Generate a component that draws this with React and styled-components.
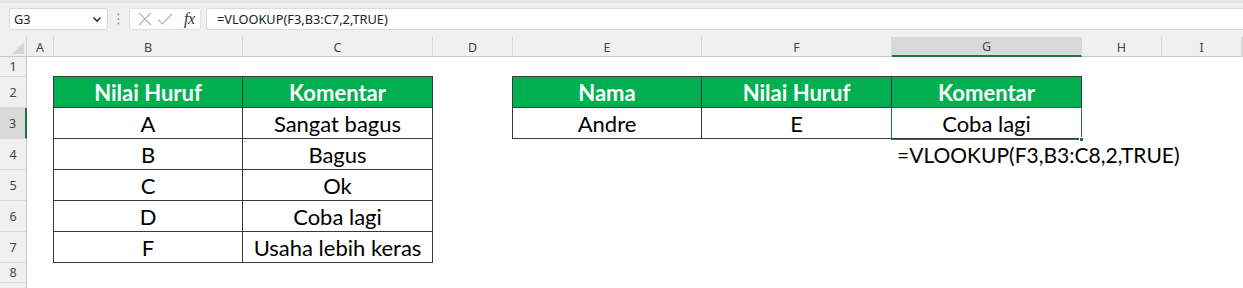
import React from 'react';
import styled, { createGlobalStyle } from 'styled-components';

const GlobalStyle = createGlobalStyle`
  html, body {
    margin: 0;
    padding: 0;
    background: #ffffff;
    overflow: hidden;
  }
`;

const Page = styled.div`
  width: 1243px;
  height: 288px;
  overflow: hidden;
  font-family: 'Noto Sans', 'Open Sans', sans-serif;
`;

const FormulaBar = styled.div`
  height: 37px;
  box-sizing: border-box;
  padding: 5px 0 7px 9px;
  display: flex;
  align-items: stretch;
  background: #f0f0f0;
  border-top: 3px solid #e4e4e4;
`;

const NameBox = styled.div`
  width: 99px;
  box-sizing: border-box;
  background: #fff;
  border: 1px solid #d9d9d9;
  border-radius: 3px;
  display: flex;
  align-items: center;
  justify-content: space-between;
  padding: 0 5px 0 4px;
  font-size: 12.8px;
  color: #222;
`;

const Grip = styled.div`
  width: 21px;
  display: flex;
  align-items: center;
  justify-content: center;
`;

const FuncBox = styled.div`
  width: 72px;
  box-sizing: border-box;
  background: #fff;
  border: 1px solid #e0e0e0;
  border-radius: 3px;
  display: flex;
  align-items: center;
  gap: 5px;
  padding: 0 4px 0 8px;
`;

const Fx = styled.span`
  font-family: 'Liberation Serif', serif;
  font-style: italic;
  font-size: 16px;
  color: #333;
  margin-left: 6px;
  letter-spacing: -0.5px;
`;

const FormulaInput = styled.div`
  flex: 1;
  margin-left: 5px;
  background: #fff;
  border: 1px solid #dcdcdc;
  border-right: none;
  border-radius: 3px 0 0 3px;
  display: flex;
  align-items: center;
  padding-left: 10px;
  font-size: 12.8px;
  color: #222;
`;

const Sheet = styled.div`
  display: grid;
  grid-template-columns: 27px 27px 189px 190px 80px 189px 190px 190px 80px 80px 1fr;
  grid-template-rows: 20px 20px repeat(6, 31px) 20px 20px;
  background: #fff;
`;

const Corner = styled.div`
  grid-column: 1;
  grid-row: 1;
  background: #f0f0f0;
  border-right: 1px solid #d4d4d4;
  border-bottom: 1px solid #c6c6c6;
  display: flex;
  align-items: flex-end;
  justify-content: flex-end;
  padding: 0 2px 2px 0;
`;

const ColHeader = styled.div`
  grid-row: 1;
  grid-column: ${(p) => p.$col};
  background: ${(p) => (p.$active ? '#d9d9d9' : '#f0f0f0')};
  border-right: 1px solid #d8d8d8;
  border-bottom: ${(p) => (p.$active ? '2px solid #217346' : '1px solid #c6c6c6')};
  display: flex;
  align-items: center;
  justify-content: center;
  font-size: 12.5px;
  color: #444;
  padding-top: 1px;
`;

const RowHeader = styled.div`
  grid-column: 1;
  grid-row: ${(p) => p.$row};
  background: ${(p) => (p.$active ? '#d9d9d9' : '#f0f0f0')};
  border-right: ${(p) => (p.$active ? '2px solid #217346' : '1px solid #c6c6c6')};
  border-bottom: 1px solid #dadada;
  display: flex;
  align-items: center;
  justify-content: center;
  font-size: 12.5px;
  color: #444;
`;

const Table = styled.div`
  grid-column: ${(p) => p.$cols};
  grid-row: ${(p) => p.$rows};
  display: grid;
  grid-template-columns: ${(p) => p.$template};
  grid-auto-rows: 31px;
  margin: -1px 0 0 -1px;
  border-top: 1px solid #3a3a3a;
  border-left: 1px solid #3a3a3a;
  font-family: Lato, 'Open Sans', sans-serif;
  font-size: 22px;
`;

const Cell = styled.div`
  border-right: 1px solid #3a3a3a;
  border-bottom: 1px solid #3a3a3a;
  display: flex;
  align-items: center;
  justify-content: center;
  background: ${(p) => (p.$head ? '#00b050' : '#fff')};
  color: ${(p) => (p.$head ? '#fff' : '#000')};
  font-weight: ${(p) => (p.$head ? 700 : 400)};
  white-space: nowrap;
`;

const Selection = styled.div`
  grid-column: 8;
  grid-row: 4;
  margin: -1px 0 -1px -1px;
  border: 1px solid #217346;
  position: relative;
  pointer-events: none;

  &::after {
    content: '';
    position: absolute;
    right: -3px;
    bottom: -3px;
    width: 5px;
    height: 5px;
    background: #217346;
    border: 1px solid #fff;
    box-sizing: border-box;
  }
`;

const Note = styled.div`
  grid-column: 8;
  grid-row: 5;
  display: flex;
  align-items: center;
  padding-left: 5px;
  font-family: Lato, 'Open Sans', sans-serif;
  font-size: 21px;
  color: #000;
  white-space: nowrap;
`;

const columns = ['A', 'B', 'C', 'D', 'E', 'F', 'G', 'H', 'I'];

const grades = [
  ['A', 'Sangat bagus'],
  ['B', 'Bagus'],
  ['C', 'Ok'],
  ['D', 'Coba lagi'],
  ['F', 'Usaha lebih keras'],
];

const App = () => (
  <Page>
    <GlobalStyle />
    <FormulaBar>
      <NameBox>
        <span>G3</span>
        <svg width="10" height="7" viewBox="0 0 10 7">
          <path d="M1.5 1.5 L5 5 L8.5 1.5" fill="none" stroke="#333" strokeWidth="1.6" />
        </svg>
      </NameBox>
      <Grip>
        <svg width="3" height="12" viewBox="0 0 3 12">
          <circle cx="1.5" cy="1.5" r="1" fill="#9a9a9a" />
          <circle cx="1.5" cy="6" r="1" fill="#9a9a9a" />
          <circle cx="1.5" cy="10.5" r="1" fill="#9a9a9a" />
        </svg>
      </Grip>
      <FuncBox>
        <svg width="14" height="14" viewBox="0 0 14 14">
          <path d="M1 1 L13 13 M13 1 L1 13" stroke="#b4b4b4" strokeWidth="1.2" />
        </svg>
        <svg width="16" height="14" viewBox="0 0 16 14">
          <path d="M1 7.5 L5.5 12 L15 2" fill="none" stroke="#b4b4b4" strokeWidth="1.2" />
        </svg>
        <Fx>fx</Fx>
      </FuncBox>
      <FormulaInput>=VLOOKUP(F3,B3:C7,2,TRUE)</FormulaInput>
    </FormulaBar>

    <Sheet>
      <Corner>
        <svg width="12" height="12" viewBox="0 0 12 12">
          <path d="M12 0 L12 12 L0 12 Z" fill="#d6d6d6" />
        </svg>
      </Corner>
      {columns.map((c, i) => (
        <ColHeader key={c} $col={i + 2} $active={c === 'G'}>
          {c}
        </ColHeader>
      ))}
      <ColHeader $col={11} />
      {[1, 2, 3, 4, 5, 6, 7, 8].map((n) => (
        <RowHeader key={n} $row={n + 1} $active={n === 3}>
          {n}
        </RowHeader>
      ))}
      <RowHeader $row={10} />

      <Table $cols="3 / 5" $rows="3 / 9" $template="189px 190px">
        <Cell $head>Nilai Huruf</Cell>
        <Cell $head>Komentar</Cell>
        {grades.map(([g, c]) => (
          <React.Fragment key={g}>
            <Cell>{g}</Cell>
            <Cell>{c}</Cell>
          </React.Fragment>
        ))}
      </Table>

      <Table $cols="6 / 9" $rows="3 / 5" $template="189px 190px 190px">
        <Cell $head>Nama</Cell>
        <Cell $head>Nilai Huruf</Cell>
        <Cell $head>Komentar</Cell>
        <Cell>Andre</Cell>
        <Cell>E</Cell>
        <Cell>Coba lagi</Cell>
      </Table>

      <Selection />
      <Note>=VLOOKUP(F3,B3:C8,2,TRUE)</Note>
    </Sheet>
  </Page>
);

export default App;
